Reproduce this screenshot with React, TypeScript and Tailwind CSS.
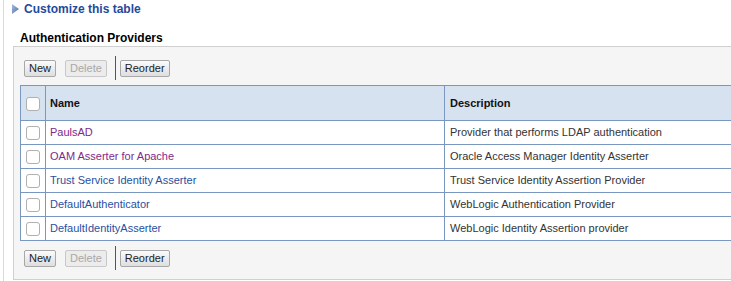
import React from "react";

const rows = [
  { name: "PaulsAD", desc: "Provider that performs LDAP authentication", visited: true },
  { name: "OAM Asserter for Apache", desc: "Oracle Access Manager Identity Asserter", visited: true },
  { name: "Trust Service Identity Asserter", desc: "Trust Service Identity Assertion Provider", visited: false },
  { name: "DefaultAuthenticator", desc: "WebLogic Authentication Provider", visited: false },
  { name: "DefaultIdentityAsserter", desc: "WebLogic Identity Assertion provider", visited: false },
];

function Btn({ label, disabled }: { label: string; disabled?: boolean }) {
  return (
    <div
      className={
        "h-[17px] px-[4px] flex items-center border rounded-[2px] text-[11px] leading-none " +
        (disabled
          ? "border-[#c8c8c8] bg-[#ececec] text-[#a8a8a8]"
          : "border-[#a8a8a8] bg-gradient-to-b from-[#fbfbfb] to-[#dedede] text-[#222]")
      }
    >
      {label}
    </div>
  );
}

function Toolbar() {
  return (
    <div className="flex items-center h-[24px] pl-[10px]">
      <Btn label="New" />
      <div className="w-[9px]" />
      <Btn label="Delete" disabled />
      <div className="w-[8px]" />
      <div className="w-px h-[24px] bg-[#555]" />
      <div className="w-[4px]" />
      <Btn label="Reorder" />
    </div>
  );
}

function Check() {
  return <div className="w-[14px] h-[14px] border border-[#b0b0b0] rounded-[3px] bg-white" />;
}

export default function App() {
  return (
    <div
      className="w-[731px] h-[281px] bg-white overflow-hidden pl-[3px]"
      style={{ fontFamily: '"Liberation Sans", Arial, sans-serif' }}
    >
      <div className="h-full border-l border-[#dadada] flex flex-col">
        <div className="flex items-center h-[15px] pl-[8px] mt-[1px]">
          <svg width="7" height="10" viewBox="0 0 7 10" className="mr-[5px]">
            <defs>
              <linearGradient id="tg" x1="0" y1="0" x2="1" y2="1">
                <stop offset="0" stopColor="#a9bedf" />
                <stop offset="1" stopColor="#4a6ea8" />
              </linearGradient>
            </defs>
            <path d="M0 0 L7 5 L0 10 Z" fill="url(#tg)" />
          </svg>
          <span className="text-[12px] font-bold text-[#1f4a9c]">Customize this table</span>
        </div>
        <div className="pl-[16px] mt-[15px] h-[13px] flex items-center text-[12px] font-bold text-black">
          Authentication Providers
        </div>
        <div className="ml-[9px] mt-[2px] flex-1 border-t border-l border-b border-[#d0d0d0] bg-[#f5f5f5] pt-[9px] flex flex-col mb-[1px]">
          <Toolbar />
          <div className="ml-[6px] mt-[5px] w-[760px] border-t border-l border-r border-[#7a97c0] text-[11px]">
            <div className="flex h-[35px] bg-[#d7e2f0] border-b border-[#7a97c0]">
              <div className="w-[25px] flex items-center justify-center border-r border-[#7a97c0] pt-[1px]">
                <Check />
              </div>
              <div className="w-[399px] flex items-center pl-[4px] font-bold text-[#111] border-r border-[#7a97c0]">
                Name
              </div>
              <div className="flex-1 flex items-center pl-[5px] font-bold text-[#111]">Description</div>
            </div>
            {rows.map((r) => (
              <div key={r.name} className="flex h-[24px] bg-white border-b border-[#7a97c0]">
                <div className="w-[25px] flex items-center justify-center border-r border-[#7a97c0]">
                  <Check />
                </div>
                <div
                  className={
                    "w-[399px] flex items-center pl-[4px] border-r border-[#7a97c0] " +
                    (r.visited ? "text-[#7e2a8a]" : "text-[#2750a2]")
                  }
                >
                  {r.name}
                </div>
                <div className="flex-1 flex items-center pl-[5px] text-[#333]">{r.desc}</div>
              </div>
            ))}
          </div>
          <div className="mt-[5px]">
            <Toolbar />
          </div>
        </div>
      </div>
    </div>
  );
}
